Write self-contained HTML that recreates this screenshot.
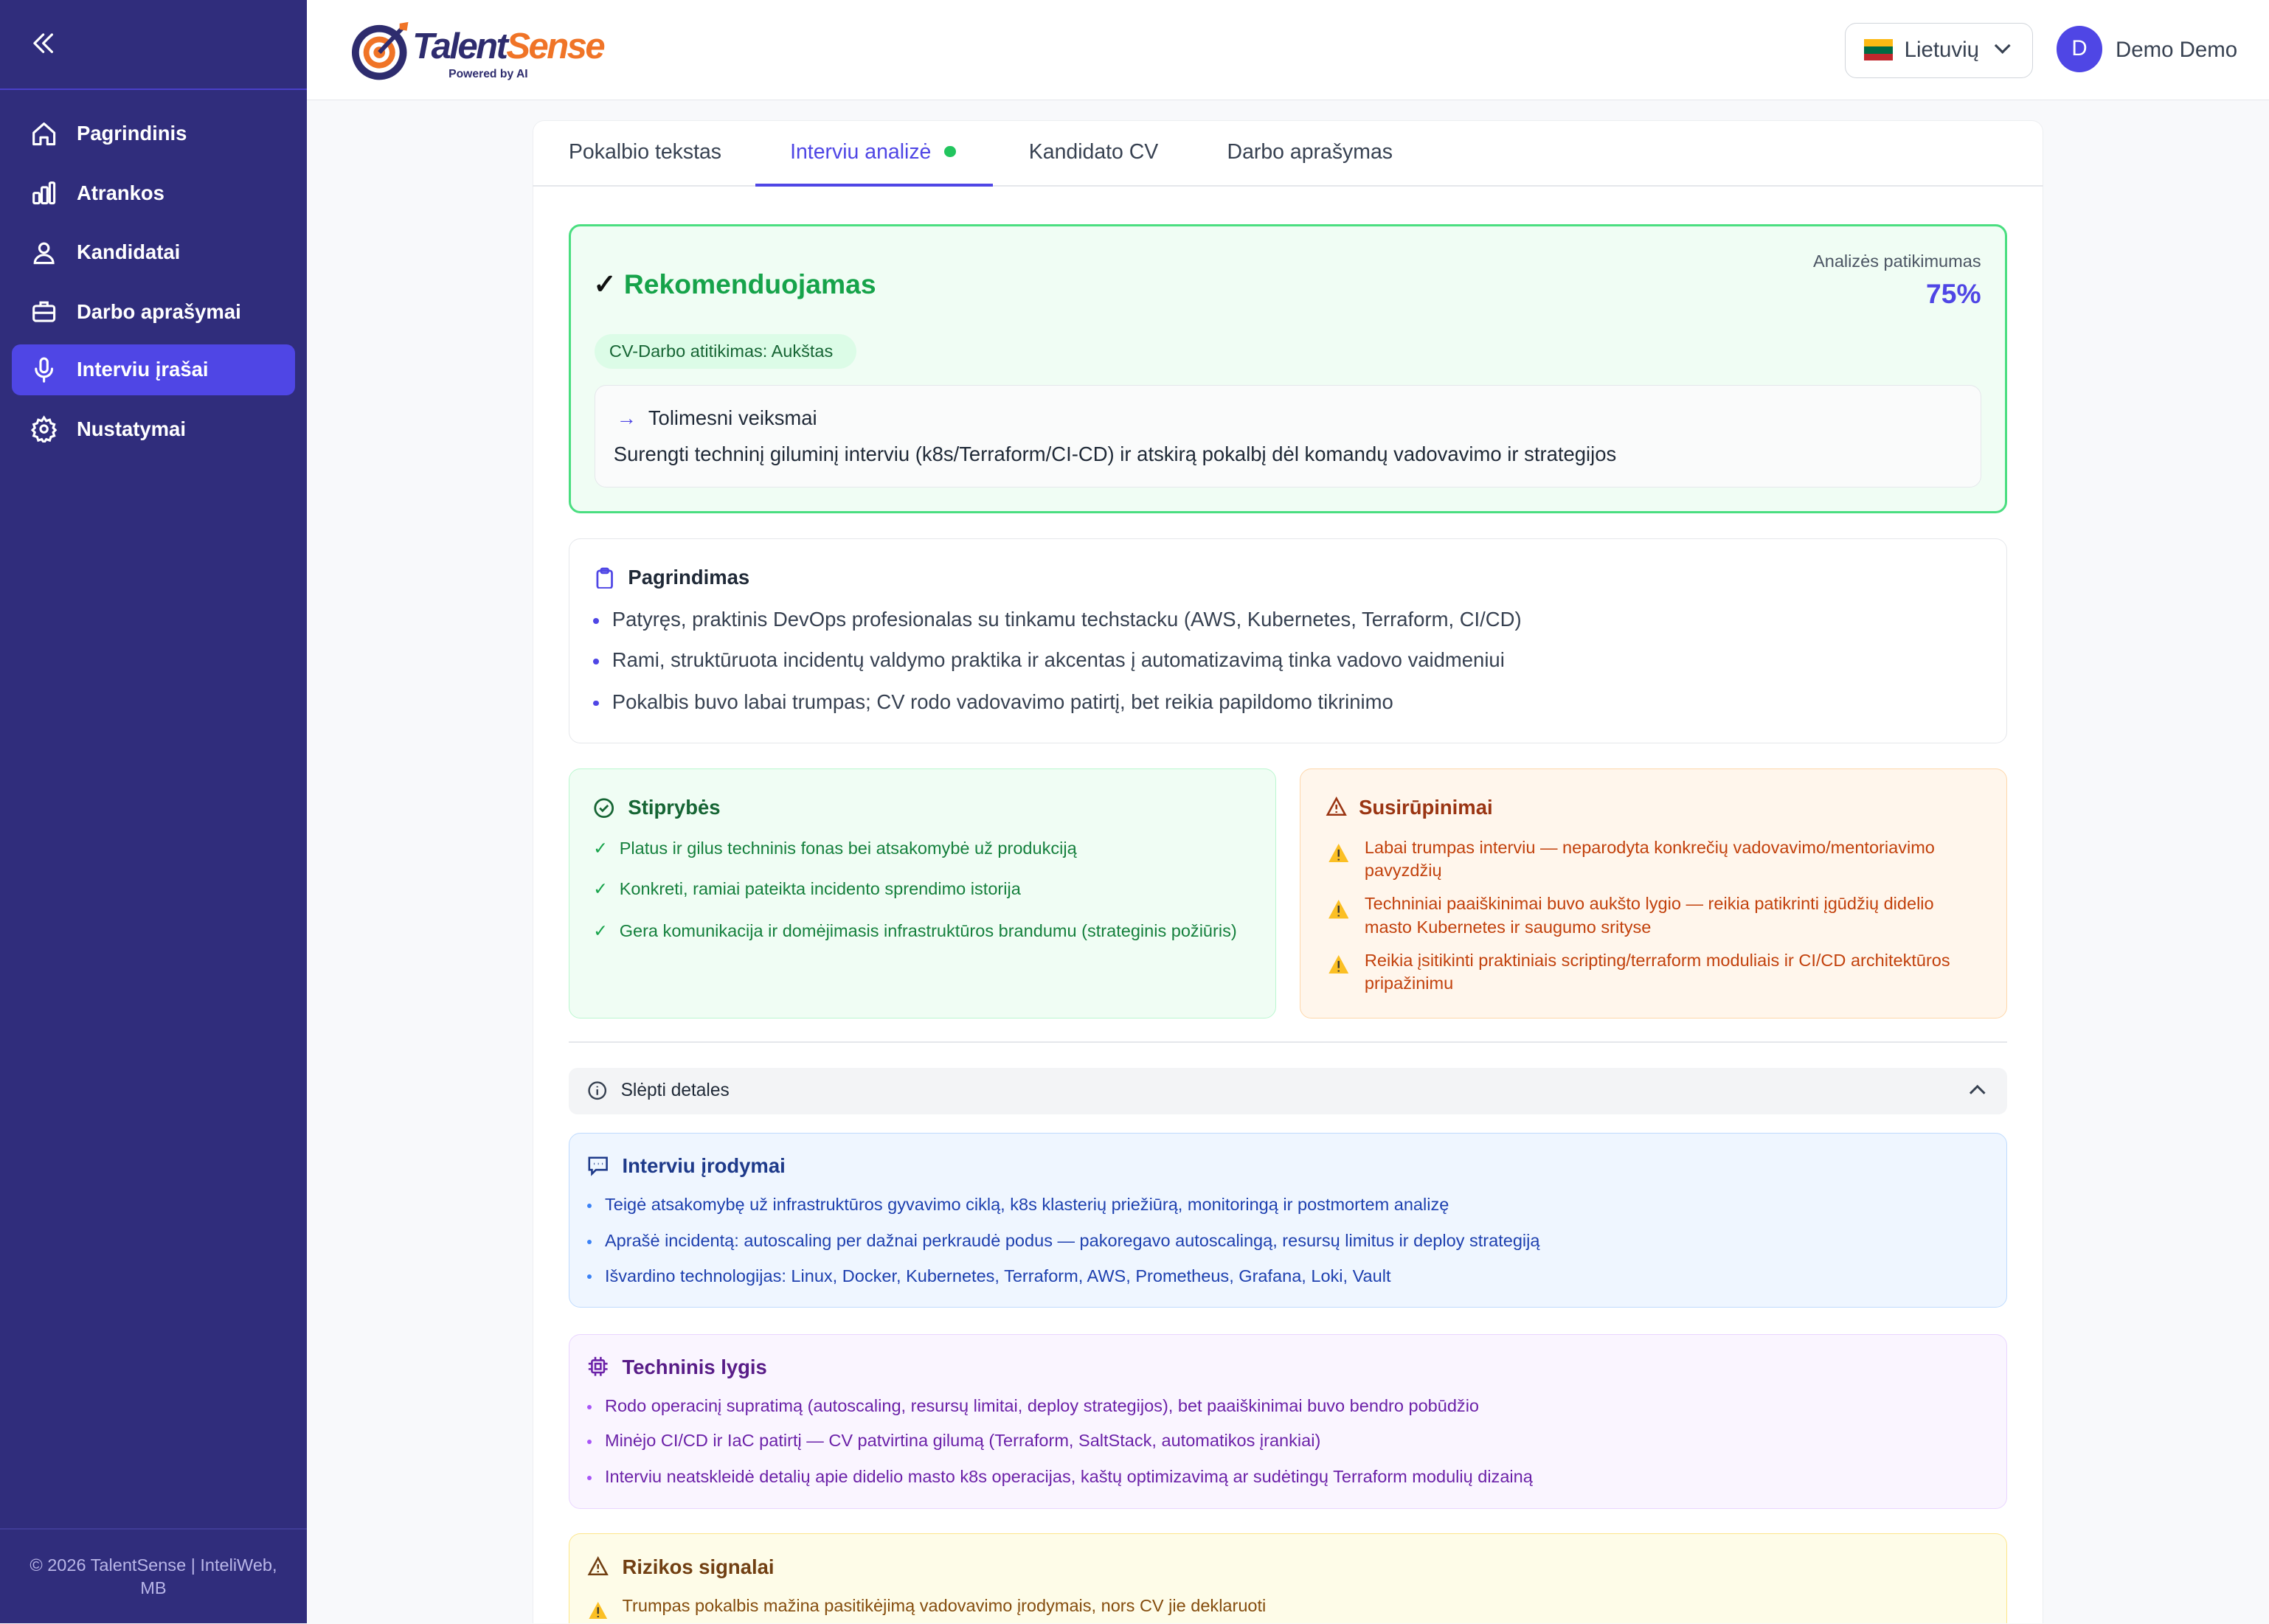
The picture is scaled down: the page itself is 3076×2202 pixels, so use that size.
<!DOCTYPE html>
<html><head><meta charset="utf-8"><style>
html,body{margin:0;padding:0;overflow:hidden;width:3076px;height:2202px;background:#f8f9fb;}
#w{width:1568px;height:1122px;overflow:hidden;zoom:1.96173;background:#f8f9fb;font-family:"Liberation Sans",sans-serif;color:#1f2937;position:relative;}
.a{position:absolute;}
.side{left:0;top:0;width:212px;height:1122px;background:#302d7c;}
.nav{position:absolute;left:8px;width:196px;height:35px;color:#fff;font-size:14px;font-weight:bold;display:flex;align-items:center;border-radius:6px;}
.nav svg{position:absolute;left:13px;}
.nav span{position:absolute;left:45px;}
.box{position:absolute;border-radius:8px;box-sizing:border-box;}
.t{position:absolute;white-space:nowrap;}
.b{position:absolute;white-space:nowrap;font-size:13.5px;}
.dot{display:inline-block;width:4px;height:4px;border-radius:2px;margin-right:9px;vertical-align:middle;}
</style></head><body><div id="w">
<div class="a side">
 <svg class="a" style="left:21px;top:21px" width="18" height="18" viewBox="0 0 18 18" fill="none" stroke="#fff" stroke-width="1.6" stroke-linecap="round" stroke-linejoin="round"><path d="M9 3 3 9l6 6M15 3 9 9l6 6"/></svg>
 <div class="a" style="left:0;top:61px;width:212px;height:1px;background:#4a40c8"></div>
 <div class="nav" style="top:75px"><svg width="19" height="19" viewBox="0 0 24 24" fill="none" stroke="#fff" stroke-width="2" stroke-linejoin="round"><path d="M3 11 12 3l9 8v10h-6v-6h-6v6H3z"/></svg><span>Pagrindinis</span></div>
 <div class="nav" style="top:116px"><svg width="19" height="19" viewBox="0 0 24 24" fill="none" stroke="#fff" stroke-width="2"><rect x="3" y="12" width="5" height="9" rx="1"/><rect x="10" y="7" width="5" height="14" rx="1"/><rect x="17" y="3" width="4" height="18" rx="1"/></svg><span>Atrankos</span></div>
 <div class="nav" style="top:157px"><svg width="19" height="19" viewBox="0 0 24 24" fill="none" stroke="#fff" stroke-width="2"><circle cx="12" cy="8" r="4"/><path d="M4 21c0-4 4-7 8-7s8 3 8 7z"/></svg><span>Kandidatai</span></div>
 <div class="nav" style="top:198px"><svg width="19" height="19" viewBox="0 0 24 24" fill="none" stroke="#fff" stroke-width="2"><rect x="3" y="7" width="18" height="13" rx="2"/><path d="M9 7V4h6v3M3 13h18"/></svg><span>Darbo aprašymai</span></div>
 <div class="nav" style="top:238px;background:#4f46e5"><svg width="19" height="19" viewBox="0 0 24 24" fill="none" stroke="#fff" stroke-width="2" stroke-linecap="round"><rect x="9" y="2" width="6" height="12" rx="3"/><path d="M5 11a7 7 0 0 0 14 0M12 18v4"/></svg><span>Interviu įrašai</span></div>
 <div class="nav" style="top:279px"><svg width="19" height="19" viewBox="0 0 24 24" fill="none" stroke="#fff" stroke-width="2"><circle cx="12" cy="12" r="3"/><path d="M12 2l2 3 3-1 1 3 3 1-1 3 2 2-2 2 1 3-3 1-1 3-3-1-2 3-2-3-3 1-1-3-3-1 1-3-2-2 2-2-1-3 3-1 1-3 3 1z"/></svg><span>Nustatymai</span></div>
 <div class="a" style="left:0;top:1056px;width:212px;height:1px;background:#403c96"></div>
 <div class="a" style="left:0;top:1074px;width:212px;text-align:center;color:#b9b6e8;font-size:12px;line-height:16px">© 2026 TalentSense | InteliWeb,<br>MB</div>
</div>
<div class="a" style="left:212px;top:0;width:1356px;height:69px;background:#fff;border-bottom:1px solid #e5e7eb"></div>
<svg class="a" style="left:242px;top:13px" width="44" height="44" viewBox="0 0 44 44"><circle cx="20" cy="23" r="19" fill="#2e2c6e"/><circle cx="20" cy="23" r="14" fill="#fff"/><circle cx="20" cy="23" r="11" fill="#f07427"/><circle cx="20" cy="23" r="7" fill="#fff"/><circle cx="20" cy="23" r="4" fill="#f07427"/><path d="M20 23 37 5" stroke="#2e2c6e" stroke-width="3"/><path d="M34 3l6-1-1 6-5-1z" fill="#f07427"/></svg>
<div class="t" style="left:285px;top:18px;font-size:25px;font-weight:bold;font-style:italic;letter-spacing:-1.3px;color:#2e2c6e">Talent<span style="color:#f07427">Sense</span></div>
<div class="t" style="left:310px;top:47px;font-size:8px;font-weight:bold;color:#2e2c6e">Powered by AI</div>
<div class="box" style="left:1275px;top:16px;width:130px;height:38px;border:1px solid #d1d5db"></div>
<div class="a" style="left:1288px;top:27px;width:20px;height:5px;background:#fdb913"></div><div class="a" style="left:1288px;top:32px;width:20px;height:5px;background:#006a44"></div><div class="a" style="left:1288px;top:37px;width:20px;height:5px;background:#c1272d"></div>
<div class="t" style="left:1316px;top:26px;font-size:15px;color:#374151">Lietuvių</div>
<svg class="a" style="left:1377px;top:29px" width="14" height="10" viewBox="0 0 14 10" fill="none" stroke="#374151" stroke-width="1.6"><path d="M2 2l5 5 5-5"/></svg>
<div class="a" style="left:1421px;top:18px;width:32px;height:32px;border-radius:16px;background:#4f46e5;color:#fff;font-size:15px;text-align:center;line-height:32px">D</div>
<div class="t" style="left:1462px;top:26px;font-size:15px;color:#374151">Demo Demo</div>

<div class="a" style="left:368px;top:83px;width:1044px;height:1039px;background:#fff;border:1px solid #eceef1;border-bottom:none;border-radius:8px 8px 0 0;box-sizing:border-box"></div>
<div class="a" style="left:368px;top:128px;width:1044px;height:1px;background:#e5e7eb"></div>
<div class="t" style="left:393px;top:97px;font-size:14.5px;color:#374151">Pokalbio tekstas</div>
<div class="t" style="left:546px;top:97px;font-size:14.5px;color:#4f46e5">Interviu analizė <span style="display:inline-block;width:8px;height:8px;border-radius:4px;background:#22c55e;margin-left:5px;vertical-align:1px"></span></div>
<div class="a" style="left:522px;top:127px;width:164px;height:2px;background:#4f46e5"></div>
<div class="t" style="left:711px;top:97px;font-size:14.5px;color:#374151">Kandidato CV</div>
<div class="t" style="left:848px;top:97px;font-size:14.5px;color:#374151">Darbo aprašymas</div>

<div class="box" style="left:393px;top:155px;width:994px;height:200px;background:#f0fdf4;border:2px solid #4ade80"></div>
<div class="t" style="left:410px;top:185px;font-size:19px;font-weight:bold;color:#16a34a"><span style="color:#111">✓</span> Rekomenduojamas</div>
<div class="t" style="right:199px;top:174px;font-size:12px;color:#4b5563">Analizės patikimumas</div>
<div class="t" style="right:199px;top:192px;font-size:19px;font-weight:bold;color:#4f46e5">75%</div>
<div class="box" style="left:411px;top:231px;width:181px;height:24px;border-radius:12px;background:#dcfce7"></div>
<div class="t" style="left:421px;top:236px;font-size:12px;color:#166534">CV-Darbo atitikimas: Aukštas</div>
<div class="box" style="left:411px;top:266px;width:958px;height:71px;background:#fafbfb;border:1px solid #e5e7eb"></div>
<div class="t" style="left:426px;top:281px;font-size:14px;color:#1f2937"><span style="color:#4f46e5;margin-right:8px">→</span>Tolimesni veiksmai</div>
<div class="t" style="left:424px;top:306px;font-size:14px;color:#1f2937">Surengti techninį giluminį interviu (k8s/Terraform/CI-CD) ir atskirą pokalbį dėl komandų vadovavimo ir strategijos</div>

<div class="box" style="left:393px;top:372px;width:994px;height:142px;background:#fff;border:1px solid #e5e7eb"></div>
<svg class="a" style="left:411px;top:392px" width="14" height="15" viewBox="0 0 14 15" fill="none" stroke="#4f46e5" stroke-width="1.4"><rect x="2" y="2.5" width="10" height="12" rx="1.5"/><rect x="4.5" y="1" width="5" height="3" rx="1"/></svg>
<div class="t" style="left:434px;top:391px;font-size:14px;font-weight:bold;color:#1f2937">Pagrindimas</div>
<div class="b" style="left:410px;top:420px;font-size:14px;color:#374151"><span class="dot" style="background:#4f46e5"></span>Patyręs, praktinis DevOps profesionalas su tinkamu techstacku (AWS, Kubernetes, Terraform, CI/CD)</div>
<div class="b" style="left:410px;top:448px;font-size:14px;color:#374151"><span class="dot" style="background:#4f46e5"></span>Rami, struktūruota incidentų valdymo praktika ir akcentas į automatizavimą tinka vadovo vaidmeniui</div>
<div class="b" style="left:410px;top:477px;font-size:14px;color:#374151"><span class="dot" style="background:#4f46e5"></span>Pokalbis buvo labai trumpas; CV rodo vadovavimo patirtį, bet reikia papildomo tikrinimo</div>

<div class="box" style="left:393px;top:531px;width:489px;height:173px;background:#f0fdf4;border:1px solid #bbf7d0"></div>
<svg class="a" style="left:410px;top:551px" width="15" height="15" viewBox="0 0 16 16" fill="none" stroke="#166534" stroke-width="1.5"><circle cx="8" cy="8" r="6.5"/><path d="M5 8l2 2 4-4"/></svg>
<div class="t" style="left:434px;top:550px;font-size:14px;font-weight:bold;color:#166534">Stiprybės</div>
<div class="b" style="left:410px;top:579px;font-size:12px;color:#15803d"><span style="color:#16a34a;margin-right:8px">✓</span>Platus ir gilus techninis fonas bei atsakomybė už produkciją</div>
<div class="b" style="left:410px;top:607px;font-size:12px;color:#15803d"><span style="color:#16a34a;margin-right:8px">✓</span>Konkreti, ramiai pateikta incidento sprendimo istorija</div>
<div class="b" style="left:410px;top:636px;font-size:12px;color:#15803d"><span style="color:#16a34a;margin-right:8px">✓</span>Gera komunikacija ir domėjimasis infrastruktūros brandumu (strateginis požiūris)</div>

<div class="box" style="left:898px;top:531px;width:489px;height:173px;background:#fff6ec;border:1px solid #fed7aa"></div>
<svg class="a" style="left:916px;top:550px" width="15" height="15" viewBox="0 0 16 16" fill="none" stroke="#9a3412" stroke-width="1.4"><path d="M8 2 1.5 14h13z"/><path d="M8 6.5v3.5M8 11.5v1"/></svg>
<div class="t" style="left:939px;top:550px;font-size:14px;font-weight:bold;color:#9a3412">Susirūpinimai</div>
<div class="a" style="left:943px;top:578px;width:420px;font-size:12px;line-height:16px;color:#c2410c">Labai trumpas interviu — neparodyta konkrečių vadovavimo/mentoriavimo pavyzdžių</div>
<div class="a" style="left:943px;top:617px;width:420px;font-size:12px;line-height:16px;color:#c2410c">Techniniai paaiškinimai buvo aukšto lygio — reikia patikrinti įgūdžių didelio masto Kubernetes ir saugumo srityse</div>
<div class="a" style="left:943px;top:656px;width:420px;font-size:12px;line-height:16px;color:#c2410c">Reikia įsitikinti praktiniais scripting/terraform moduliais ir CI/CD architektūros pripažinimu</div>
<svg class="a" style="left:918px;top:583px" width="14" height="13" viewBox="0 0 14 13"><path d="M7 0 14 13H0z" fill="#fbbf24"/><path d="M7 4v5M7 10.5v1" stroke="#333" stroke-width="1.2"/></svg>
<svg class="a" style="left:918px;top:622px" width="14" height="13" viewBox="0 0 14 13"><path d="M7 0 14 13H0z" fill="#fbbf24"/><path d="M7 4v5M7 10.5v1" stroke="#333" stroke-width="1.2"/></svg>
<svg class="a" style="left:918px;top:660px" width="14" height="13" viewBox="0 0 14 13"><path d="M7 0 14 13H0z" fill="#fbbf24"/><path d="M7 4v5M7 10.5v1" stroke="#333" stroke-width="1.2"/></svg>

<div class="a" style="left:393px;top:720px;width:994px;height:1px;background:#e5e7eb"></div>
<div class="box" style="left:393px;top:738px;width:994px;height:32px;background:#f3f4f6;border-radius:6px"></div>
<svg class="a" style="left:406px;top:747px" width="14" height="14" viewBox="0 0 16 16" fill="none" stroke="#374151" stroke-width="1.4"><circle cx="8" cy="8" r="6.5"/><path d="M8 7v4.5M8 4.5v1"/></svg>
<div class="t" style="left:429px;top:747px;font-size:12.5px;color:#1f2937">Slėpti detales</div>
<svg class="a" style="left:1360px;top:749px" width="13" height="9" viewBox="0 0 13 9" fill="none" stroke="#374151" stroke-width="1.5"><path d="M1.5 7 6.5 2l5 5"/></svg>

<div class="box" style="left:393px;top:783px;width:994px;height:121px;background:#eff6ff;border:1px solid #bfdbfe"></div>
<svg class="a" style="left:406px;top:799px" width="15" height="14" viewBox="0 0 16 15" fill="none" stroke="#1e3a8a" stroke-width="1.4"><path d="M1.5 1.5h13v9h-8l-3 3v-3h-2z"/><path d="M5 6h.5M8 6h.5M11 6h.5"/></svg>
<div class="t" style="left:430px;top:798px;font-size:14px;font-weight:bold;color:#1e3a8a">Interviu įrodymai</div>
<div class="b" style="left:406px;top:826px;font-size:12px;color:#1e40af"><span class="dot" style="background:#3b82f6;width:3px;height:3px"></span>Teigė atsakomybę už infrastruktūros gyvavimo ciklą, k8s klasterių priežiūrą, monitoringą ir postmortem analizę</div>
<div class="b" style="left:406px;top:851px;font-size:12px;color:#1e40af"><span class="dot" style="background:#3b82f6;width:3px;height:3px"></span>Aprašė incidentą: autoscaling per dažnai perkraudė podus — pakoregavo autoscalingą, resursų limitus ir deploy strategiją</div>
<div class="b" style="left:406px;top:875px;font-size:12px;color:#1e40af"><span class="dot" style="background:#3b82f6;width:3px;height:3px"></span>Išvardino technologijas: Linux, Docker, Kubernetes, Terraform, AWS, Prometheus, Grafana, Loki, Vault</div>

<div class="box" style="left:393px;top:922px;width:994px;height:121px;background:#faf5ff;border:1px solid #e9d5ff"></div>
<svg class="a" style="left:406px;top:937px" width="15" height="15" viewBox="0 0 16 16" fill="none" stroke="#6b21a8" stroke-width="1.4"><rect x="3.5" y="3.5" width="9" height="9" rx="1"/><rect x="6" y="6" width="4" height="4"/><path d="M6 1v2.5M10 1v2.5M6 12.5V15M10 12.5V15M1 6h2.5M1 10h2.5M12.5 6H15M12.5 10H15"/></svg>
<div class="t" style="left:430px;top:937px;font-size:14px;font-weight:bold;color:#581c87">Techninis lygis</div>
<div class="b" style="left:406px;top:965px;font-size:12px;color:#6b21a8"><span class="dot" style="background:#a855f7;width:3px;height:3px"></span>Rodo operacinį supratimą (autoscaling, resursų limitai, deploy strategijos), bet paaiškinimai buvo bendro pobūdžio</div>
<div class="b" style="left:406px;top:989px;font-size:12px;color:#6b21a8"><span class="dot" style="background:#a855f7;width:3px;height:3px"></span>Minėjo CI/CD ir IaC patirtį — CV patvirtina gilumą (Terraform, SaltStack, automatikos įrankiai)</div>
<div class="b" style="left:406px;top:1014px;font-size:12px;color:#6b21a8"><span class="dot" style="background:#a855f7;width:3px;height:3px"></span>Interviu neatskleidė detalių apie didelio masto k8s operacijas, kaštų optimizavimą ar sudėtingų Terraform modulių dizainą</div>

<div class="a" style="left:393px;top:1060px;width:994px;height:62px;background:#fefce8;border:1px solid #fde68a;border-bottom:none;border-radius:8px 8px 0 0;box-sizing:border-box"></div>
<svg class="a" style="left:406px;top:1075px" width="15" height="15" viewBox="0 0 16 16" fill="none" stroke="#713f12" stroke-width="1.4"><path d="M8 2 1.5 14h13z"/><path d="M8 6.5v3.5M8 11.5v1"/></svg>
<div class="t" style="left:430px;top:1075px;font-size:14px;font-weight:bold;color:#713f12">Rizikos signalai</div>
<svg class="a" style="left:407px;top:1107px" width="13" height="12" viewBox="0 0 14 13"><path d="M7 0 14 13H0z" fill="#fbbf24"/><path d="M7 4v5M7 10.5v1" stroke="#333" stroke-width="1.2"/></svg>
<div class="b" style="left:430px;top:1103px;font-size:12px;color:#854d0e">Trumpas pokalbis mažina pasitikėjimą vadovavimo įrodymais, nors CV jie deklaruoti</div>
</div></body></html>
